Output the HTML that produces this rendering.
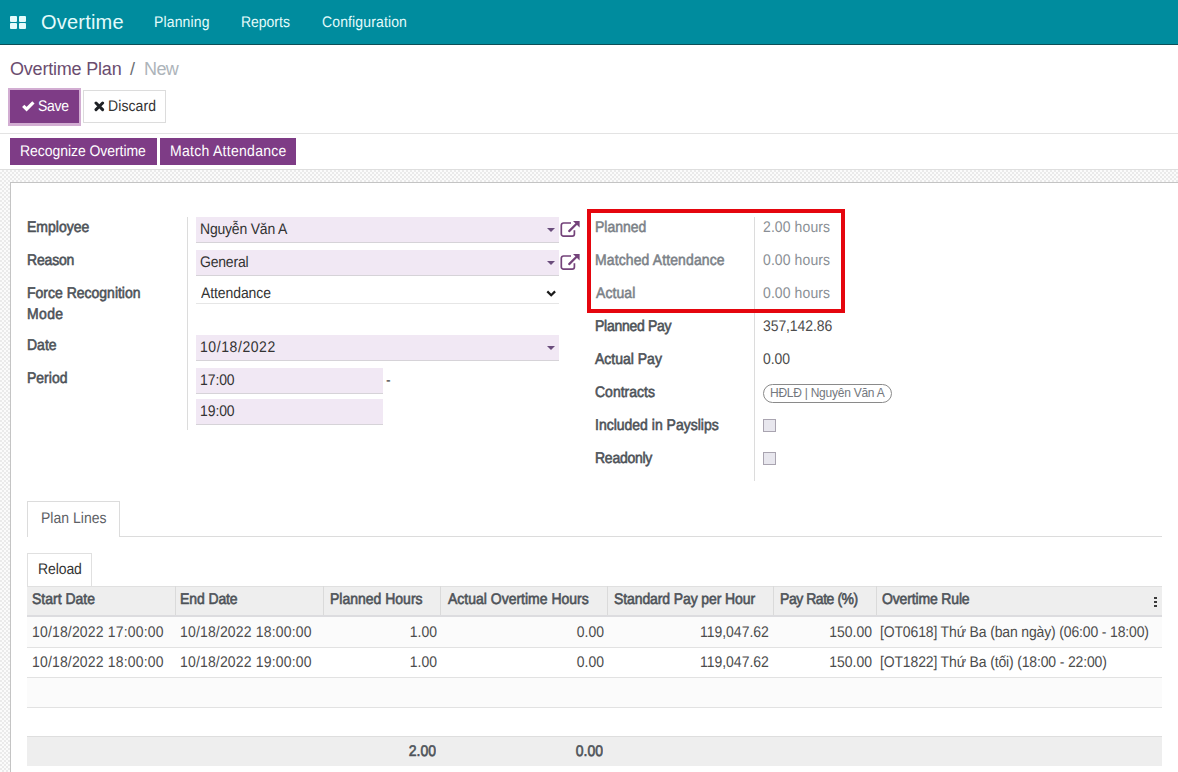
<!DOCTYPE html>
<html><head><meta charset="utf-8">
<style>
*{box-sizing:border-box;margin:0;padding:0}
html,body{width:1178px;height:772px;overflow:hidden;background:#fff;font-family:"Liberation Sans",sans-serif;color:#4c4c4c}
.a{position:absolute;white-space:nowrap}
.t14{font-size:15.4px;line-height:14px;transform:scaleX(0.9091);transform-origin:0 0;text-rendering:geometricPrecision}
.nav{position:absolute;left:0;top:0;width:1178px;height:45px;background:#008c9e;border-bottom:1px solid #0c4f57}
.nav .a{color:#e4fbfb}
.grid{position:absolute;left:10px;top:16px;width:16px;height:13px}
.grid i{position:absolute;width:7px;height:6px;background:#e4fbfb;border-radius:1px}
.btnp{position:absolute;background:#7e3c86;color:#fff}
.lbl{font-size:15.4px;line-height:14px;transform:scaleX(0.9091);transform-origin:0 0;text-rendering:geometricPrecision;color:#4d5258;-webkit-text-stroke:0.6px #4d5258}
.ro{color:#7b8187;-webkit-text-stroke:0.55px #7b8187}
.val{font-size:15.4px;line-height:14px;transform:scaleX(0.9091);transform-origin:0 0;text-rendering:geometricPrecision;color:#4c4c4c;letter-spacing:-0.1px}
.inp{position:absolute;background:#f1e8f4;border-bottom:1px solid #d6d3d8}
.vline{position:absolute;width:1px;background:#dcdcdc}
.hline{position:absolute;height:1px;background:#e2e2e2}
.th{font-size:15.4px;line-height:14px;transform:scaleX(0.9091);transform-origin:0 0;text-rendering:geometricPrecision;color:#4d5258;-webkit-text-stroke:0.6px #4d5258}
.td{font-size:15.4px;line-height:14px;transform:scaleX(0.9091);transform-origin:0 0;text-rendering:geometricPrecision;color:#4c4c4c}
.sep{position:absolute;top:586px;width:1px;height:29px;background:#dadada}
.ra{transform-origin:100% 0 !important}
</style></head><body>

<!-- navbar -->
<div class="nav">
  <div class="grid"><i style="left:0;top:0"></i><i style="left:9px;top:0"></i><i style="left:0;top:7px"></i><i style="left:9px;top:7px"></i></div>
  <div class="a" style="left:41.00px;top:12px;font-size:20px;line-height:20px;letter-spacing:0.200px">Overtime</div>
  <div class="a t14" style="left:153.90px;top:16.00px;letter-spacing:0.165px">Planning</div>
  <div class="a t14" style="left:240.80px;top:16.00px;letter-spacing:-0.022px">Reports</div>
  <div class="a t14" style="left:321.5px;top:16.00px;letter-spacing:0.154px">Configuration</div>
</div>

<!-- breadcrumb -->
<div class="a" style="left:10px;top:60px;font-size:18px;line-height:18px;color:#6b4d6f;letter-spacing:-0.2px">Overtime Plan</div>
<div class="a" style="left:130px;top:60px;font-size:18px;line-height:18px;color:#6c6f73">/</div>
<div class="a" style="left:144px;top:60px;font-size:18px;line-height:18px;color:#adb4ba;letter-spacing:-0.6px">New</div>

<!-- save / discard -->
<div style="position:absolute;left:8px;top:88px;width:73px;height:38px;background:#d2add2"></div>
<div class="btnp" style="left:10px;top:90px;width:69px;height:33px"></div>
<svg class="a" style="left:21px;top:100px" width="14" height="12" viewBox="0 0 14 12"><path d="M2.2 5.8 L5.6 9.2 L12.4 2.4" fill="none" stroke="#fff" stroke-width="3.2"/></svg>
<div class="a t14" style="left:38px;top:100.00px;color:#fff;letter-spacing:-0.330px">Save</div>
<div style="position:absolute;left:83px;top:90px;width:83px;height:33px;border:1px solid #dcdcdc;background:#fff"></div>
<svg class="a" style="left:94px;top:101px" width="11" height="11" viewBox="0 0 11 11"><path d="M2 2 L8.6 8.6 M8.6 2 L2 8.6" fill="none" stroke="#1f2226" stroke-width="3" stroke-linecap="round"/></svg>
<div class="a t14" style="left:108px;top:100.00px;color:#333;letter-spacing:0.110px">Discard</div>

<div class="hline" style="left:0;top:133px;width:1178px;background:#e3e3e3"></div>

<!-- action buttons -->
<div class="btnp" style="left:10px;top:138px;width:147px;height:27px"></div>
<div class="a t14" style="left:20.40px;top:145.00px;color:#fff;letter-spacing:-0.055px">Recognize Overtime</div>
<div class="btnp" style="left:160px;top:138px;width:136px;height:27px"></div>
<div class="a t14" style="left:169.70px;top:145.00px;color:#fff;letter-spacing:0.319px">Match Attendance</div>

<!-- background pattern -->
<div style="position:absolute;left:0;top:169px;width:1178px;height:1px;background:#dedede"></div>
<div style="position:absolute;left:0;top:170px;width:1178px;height:602px;background-color:#fff;background-image:conic-gradient(#eaeaea 25%,#fbfbfb 0 50%,#eaeaea 0 75%,#fbfbfb 0);background-size:4px 4px"></div>

<!-- sheet -->
<div style="position:absolute;left:10px;top:182px;width:1180px;height:600px;background:#fff;border:1px solid #c4c4c4"></div>


<!-- ===== form left ===== -->
<div class="vline" style="left:187px;top:217px;height:213px"></div>
<div class="a lbl" style="left:27px;top:221.00px">Employee</div>
<div class="a lbl" style="letter-spacing:-0.198px;left:27px;top:254.00px">Reason</div>
<div class="a lbl" style="left:27px;top:287.00px">Force Recognition</div>
<div class="a lbl" style="letter-spacing:0.385px;left:27px;top:308.00px">Mode</div>
<div class="a lbl" style="left:27px;top:339.00px">Date</div>
<div class="a lbl" style="left:27px;top:372.00px">Period</div>

<div class="inp" style="left:196px;top:217px;width:363px;height:26px"></div>
<div class="a val" style="left:200px;top:223.00px;color:#333;letter-spacing:-0.220px">Nguyễn Văn A</div>
<svg class="a" style="left:547px;top:228px" width="8" height="4"><path d="M0 0H8L4 4Z" fill="#6a4d7c"/></svg>
<svg class="a" style="left:560px;top:220px" width="21" height="18" viewBox="0 0 21 18"><path d="M11 3H3.5a2.2 2.2 0 0 0-2.2 2.2V13.9a2.2 2.2 0 0 0 2.2 2.2H12.2a2.2 2.2 0 0 0 2.2-2.2V10.2" fill="none" stroke="#74437a" stroke-width="1.7"/><path d="M9.2 11.1L16.6 3.8" stroke="#74437a" stroke-width="2.2" stroke-linecap="round"/><path d="M13 1H19.6V7.6Z" fill="#74437a"/></svg>

<div class="inp" style="left:196px;top:250px;width:363px;height:26px"></div>
<div class="a val" style="left:200px;top:256.00px;color:#333;letter-spacing:-0.220px">General</div>
<svg class="a" style="left:547px;top:261px" width="8" height="4"><path d="M0 0H8L4 4Z" fill="#6a4d7c"/></svg>
<svg class="a" style="left:560px;top:253px" width="21" height="18" viewBox="0 0 21 18"><path d="M11 3H3.5a2.2 2.2 0 0 0-2.2 2.2V13.9a2.2 2.2 0 0 0 2.2 2.2H12.2a2.2 2.2 0 0 0 2.2-2.2V10.2" fill="none" stroke="#74437a" stroke-width="1.7"/><path d="M9.2 11.1L16.6 3.8" stroke="#74437a" stroke-width="2.2" stroke-linecap="round"/><path d="M13 1H19.6V7.6Z" fill="#74437a"/></svg>

<div class="hline" style="left:196px;top:303px;width:363px;background:#e6e6e6"></div>
<div class="a val" style="left:201px;top:287.00px;color:#333">Attendance</div>
<svg class="a" style="left:546px;top:290px" width="11" height="8" viewBox="0 0 11 8"><path d="M1.3 1.4L5.2 5.3L9.1 1.4" fill="none" stroke="#1a1a1a" stroke-width="2.2"/></svg>

<div class="inp" style="left:196px;top:335px;width:363px;height:26px"></div>
<div class="a val" style="left:200px;top:341.00px;color:#333;letter-spacing:0.638px">10/18/2022</div>
<svg class="a" style="left:547px;top:346px" width="8" height="4"><path d="M0 0H8L4 4Z" fill="#6a4d7c"/></svg>

<div class="inp" style="left:196px;top:368px;width:187px;height:26px"></div>
<div class="a val" style="left:200px;top:374.00px;color:#333;">17:00</div>
<div class="a val" style="left:386px;top:374.00px;color:#333">-</div>
<div class="inp" style="left:196px;top:399px;width:187px;height:26px"></div>
<div class="a val" style="left:200px;top:405.00px;color:#333;">19:00</div>

<!-- ===== form right ===== -->
<div class="vline" style="left:754px;top:217px;height:264px"></div>
<div class="a lbl ro" style="left:595px;top:221.00px">Planned</div>
<div class="a lbl ro" style="left:595px;top:254.00px;letter-spacing:0.132px">Matched Attendance</div>
<div class="a lbl ro" style="letter-spacing:0.1px;left:595.50px;top:287.00px">Actual</div>
<div class="a val" style="left:763px;top:221.00px;color:#8a8f95;letter-spacing:0.110px">2.00 hours</div>
<div class="a val" style="left:763px;top:254.00px;color:#8a8f95;letter-spacing:0.110px">0.00 hours</div>
<div class="a val" style="left:763px;top:287.00px;color:#8a8f95;letter-spacing:0.110px">0.00 hours</div>
<div style="position:absolute;left:587px;top:209px;width:258px;height:104px;border:4px solid #e5060e"></div>

<div class="a lbl" style="left:595px;top:320.00px;letter-spacing:-0.308px">Planned Pay</div>
<div class="a lbl" style="left:595px;top:353.00px">Actual Pay</div>
<div class="a lbl" style="left:595px;top:386.00px">Contracts</div>
<div class="a lbl" style="left:595px;top:419.00px">Included in Payslips</div>
<div class="a lbl" style="left:595px;top:452.00px;letter-spacing:-0.275px">Readonly</div>
<div class="a val" style="left:763px;top:320.00px">357,142.86</div>
<div class="a val" style="left:763px;top:353.00px">0.00</div>
<div style="position:absolute;left:763px;top:384px;width:129px;height:19px;border:1px solid #8a8a8a;border-radius:10px"></div>
<div class="a" style="left:770px;top:387px;font-size:12px;line-height:12px;color:#73787e;letter-spacing:-0.25px">HĐLĐ | Nguyên Văn A</div>
<div style="position:absolute;left:763px;top:419px;width:13px;height:13px;border:1px solid #a9a4b0;background:#e8e7ee"></div>
<div style="position:absolute;left:763px;top:452px;width:13px;height:13px;border:1px solid #a9a4b0;background:#e8e7ee"></div>

<!-- ===== tabs ===== -->
<div class="hline" style="left:27px;top:536px;width:1135px;background:#dcdcdc"></div>
<div style="position:absolute;left:27px;top:501px;width:93px;height:36px;border:1px solid #dcdcdc;border-bottom:none;background:#fff"></div>
<div class="a t14" style="left:41px;top:512.00px;color:#5d6166;letter-spacing:0.033px">Plan Lines</div>

<div style="position:absolute;left:27px;top:553px;width:65px;height:34px;border:1px solid #e0e0e0;border-bottom:none;background:#fff"></div>
<div class="a t14" style="left:38px;top:563.00px;color:#333;letter-spacing:-0.110px">Reload</div>

<!-- ===== table ===== -->
<div style="position:absolute;left:27px;top:586px;width:1135px;height:29px;background:#eeeeee;border-top:1px solid #e0e0e0"></div>
<div style="position:absolute;left:27px;top:615px;width:1135px;height:2px;background:#dcdcdf"></div><div style="position:absolute;left:27px;top:617px;width:1135px;height:1px;background:#ececec"></div>
<div class="sep" style="left:175px"></div>
<div class="sep" style="left:323px"></div>
<div class="sep" style="left:440px"></div>
<div class="sep" style="left:607px"></div>
<div class="sep" style="left:773px"></div>
<div class="sep" style="left:876px"></div>
<div class="a th" style="left:32px;top:593.00px">Start Date</div>
<div class="a th" style="letter-spacing:-0.110px;left:180px;top:593.00px">End Date</div>
<div class="a th" style="left:330px;top:593.00px">Planned Hours</div>
<div class="a th" style="left:448px;top:593.00px">Actual Overtime Hours</div>
<div class="a th" style="left:614px;top:593.00px;letter-spacing:-0.110px">Standard Pay per Hour</div>
<div class="a th" style="left:780px;top:593.00px;letter-spacing:-0.495px">Pay Rate (%)</div>
<div class="a th" style="left:881.5px;top:593.00px;letter-spacing:-0.165px">Overtime Rule</div>
<div style="position:absolute;left:1154px;top:596.5px;width:3px;height:2.5px;background:#3a3a3a"></div>
<div style="position:absolute;left:1154px;top:600.5px;width:3px;height:2.5px;background:#3a3a3a"></div>
<div style="position:absolute;left:1154px;top:604.5px;width:3px;height:2.5px;background:#3a3a3a"></div>

<div style="position:absolute;left:27px;top:617px;width:1135px;height:30px;background:#fbfbfb"></div>
<div class="hline" style="left:27px;top:647px;width:1135px;background:#e2e2e2"></div>
<div class="hline" style="left:27px;top:677px;width:1135px;background:#e2e2e2"></div>
<div style="position:absolute;left:27px;top:678px;width:1135px;height:29px;background:#fbfbfb"></div>
<div class="hline" style="left:27px;top:707px;width:1135px;background:#e2e2e2"></div>
<div style="position:absolute;left:27px;top:736px;width:1135px;height:30px;background:#eeeeee;border-top:1px solid #dedede"></div>

<div class="a td" style="left:31.5px;top:626.00px;letter-spacing:0.187px">10/18/2022 17:00:00</div>
<div class="a td" style="left:179.5px;top:626.00px;letter-spacing:0.187px">10/18/2022 18:00:00</div>
<div class="a ra td" style="right:741.50px;top:626.00px">1.00</div>
<div class="a ra td" style="right:574.50px;top:626.00px">0.00</div>
<div class="a ra td" style="right:409px;top:626.00px">119,047.62</div>
<div class="a ra td" style="right:306px;top:626.00px">150.00</div>
<div class="a td" style="left:880px;top:626.00px;letter-spacing:-0.165px">[OT0618] Thứ Ba (ban ngày) (06:00 - 18:00)</div>

<div class="a td" style="left:31.5px;top:656.00px;letter-spacing:0.187px">10/18/2022 18:00:00</div>
<div class="a td" style="left:179.5px;top:656.00px;letter-spacing:0.187px">10/18/2022 19:00:00</div>
<div class="a ra td" style="right:741.50px;top:656.00px">1.00</div>
<div class="a ra td" style="right:574.50px;top:656.00px">0.00</div>
<div class="a ra td" style="right:409px;top:656.00px">119,047.62</div>
<div class="a ra td" style="right:306px;top:656.00px">150.00</div>
<div class="a td" style="left:880px;top:656.00px;letter-spacing:-0.165px">[OT1822] Thứ Ba (tối) (18:00 - 22:00)</div>

<div class="a ra th" style="right:742px;top:745.00px;letter-spacing:0">2.00</div>
<div class="a ra th" style="right:575px;top:745.00px;letter-spacing:0">0.00</div>

</body></html>
